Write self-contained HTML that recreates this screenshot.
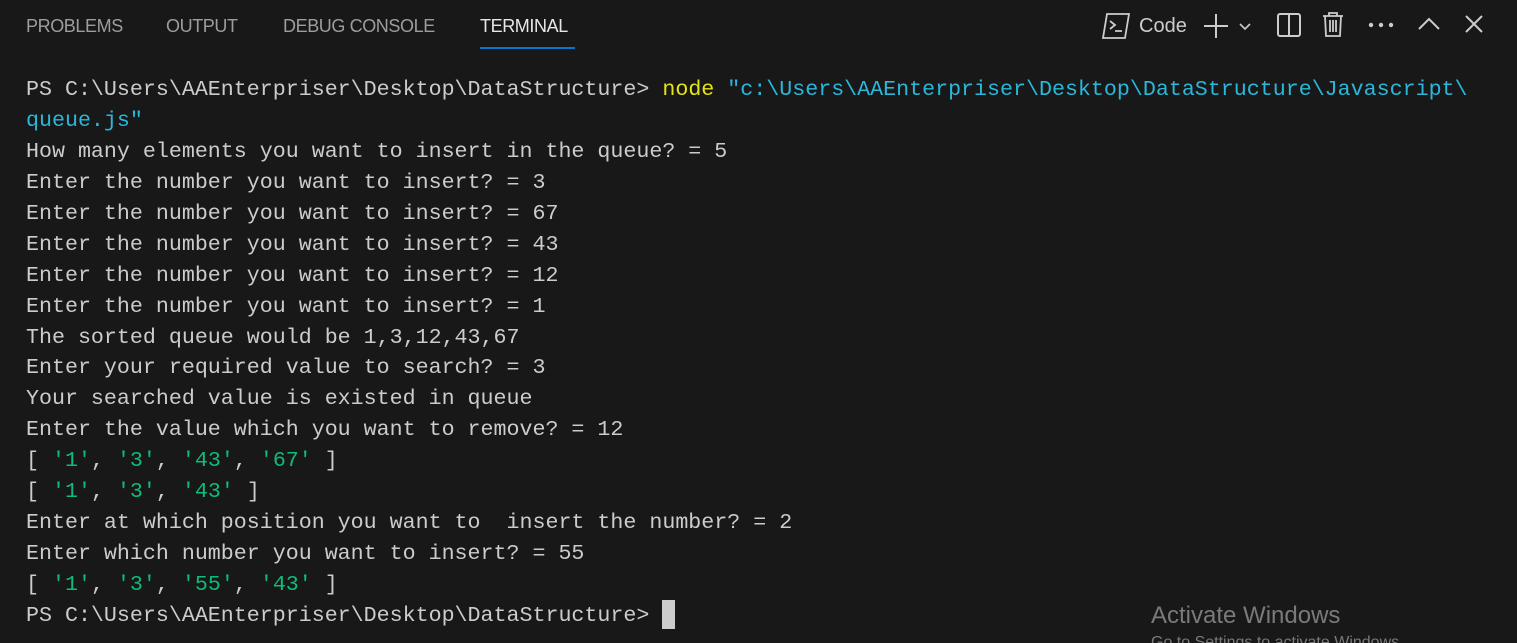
<!DOCTYPE html>
<html style="overflow:hidden;height:643px"><head><style>
body{margin:0;width:1517px;height:643px;background:#181818;overflow:hidden;position:relative;font-family:"Liberation Sans",sans-serif}
.tab{position:absolute;top:16px;font-size:18px;color:#9d9d9d;letter-spacing:-0.4px}
pre{position:absolute;left:26px;top:75px;margin:0;font-family:"Liberation Mono",monospace;font-size:21.65px;line-height:30.93px;color:#cccccc}
.y{color:#e5e510}.b{color:#29b8db}.g{color:#0dbc79}
.cur{display:inline-block;width:13px;height:29px;background:#cccccc;vertical-align:top;margin-top:-1px}
svg{position:absolute}
</style></head><body>
<div class="tab" style="left:26px">PROBLEMS</div>
<div class="tab" style="left:166px">OUTPUT</div>
<div class="tab" style="left:283px">DEBUG CONSOLE</div>
<div class="tab" style="left:480px;color:#e7e7e7">TERMINAL</div>
<div style="position:absolute;left:480px;top:47px;width:95px;height:2px;background:#0078d4"></div>

<svg style="left:1102px;top:12px" width="30" height="28" viewBox="0 0 30 28" fill="none" stroke="#ccc" stroke-width="1.8"><path d="M5 2h22l-4 24H1z"/><path d="M8 9l5 4-5 4M13 19h7"/></svg>
<div style="position:absolute;left:1139px;top:15px;font-size:20px;color:#ccc">Code</div>
<svg style="left:1203px;top:13px" width="50" height="26" fill="none" stroke="#ccc" stroke-width="2"><path d="M13 1v24M1 13h24"/><path d="M37 11l5 5 5-5" stroke-width="1.6"/></svg>
<svg style="left:1277px;top:13px" width="24" height="24" fill="none" stroke="#ccc" stroke-width="2"><rect x="1" y="1" width="22" height="22" rx="2"/><path d="M12 1v22"/></svg>
<svg style="left:1322px;top:11px" width="22" height="27" fill="none" stroke="#ccc" stroke-width="1.8"><path d="M1 5h20M7 5V2h8v3M3 5l1 20h14l1-20M8 9v12M11 9v12M14 9v12"/></svg>
<svg style="left:1368px;top:22px" width="26" height="6" fill="#ccc"><circle cx="3" cy="3" r="2.2"/><circle cx="13" cy="3" r="2.2"/><circle cx="23" cy="3" r="2.2"/></svg>
<svg style="left:1418px;top:17px" width="22" height="14" fill="none" stroke="#ccc" stroke-width="2"><path d="M1 12l10-10 10 10"/></svg>
<svg style="left:1465px;top:15px" width="18" height="18" fill="none" stroke="#ccc" stroke-width="2"><path d="M1 1l16 16M17 1L1 17"/></svg>

<pre>PS C:\Users\AAEnterpriser\Desktop\DataStructure&gt; <span class="y">node</span> <span class="b">"c:\Users\AAEnterpriser\Desktop\DataStructure\Javascript\
queue.js"</span>
How many elements you want to insert in the queue? = 5
Enter the number you want to insert? = 3
Enter the number you want to insert? = 67
Enter the number you want to insert? = 43
Enter the number you want to insert? = 12
Enter the number you want to insert? = 1
The sorted queue would be 1,3,12,43,67
Enter your required value to search? = 3
Your searched value is existed in queue
Enter the value which you want to remove? = 12
[ <span class="g">'1'</span>, <span class="g">'3'</span>, <span class="g">'43'</span>, <span class="g">'67'</span> ]
[ <span class="g">'1'</span>, <span class="g">'3'</span>, <span class="g">'43'</span> ]
Enter at which position you want to  insert the number? = 2
Enter which number you want to insert? = 55
[ <span class="g">'1'</span>, <span class="g">'3'</span>, <span class="g">'55'</span>, <span class="g">'43'</span> ]
PS C:\Users\AAEnterpriser\Desktop\DataStructure&gt; <span class="cur"></span></pre>

<div style="position:absolute;left:1151px;top:602px;font-size:24px;color:#7a7a7a">Activate Windows</div>
<div style="position:absolute;left:1151px;top:634px;height:9px;overflow:hidden;font-size:16px;color:#7a7a7a;line-height:18px">Go to Settings to activate Windows.</div>
</body></html>
